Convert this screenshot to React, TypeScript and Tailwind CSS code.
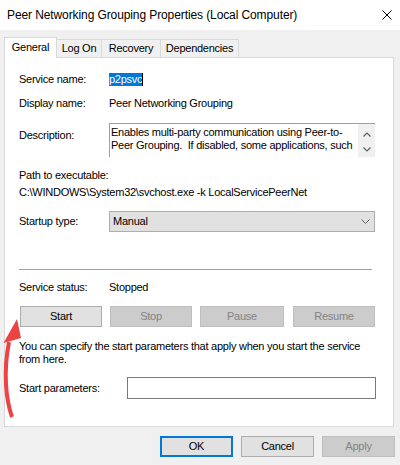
import React from "react";

const font = { fontFamily: '"Liberation Sans", Arial, sans-serif' };

function Btn({ label, w, disabled, primary }: { label: string; w: string; disabled?: boolean; primary?: boolean }) {
  let cls = "h-[21px] flex items-center justify-center shrink-0 " + w + " ";
  if (disabled) cls += "bg-[#cccccc] border border-[#bfbfbf] text-[#838383]";
  else if (primary) cls += "bg-[#e1e1e1] border-2 border-[#0078d7] text-black";
  else cls += "bg-[#e1e1e1] border border-[#adadad] text-black";
  return <div className={cls}>{label}</div>;
}

export default function App() {
  return (
    <div
      className="relative w-[400px] h-[465px] bg-[#f0f0f0] text-[11px] leading-[13px] tracking-[-0.25px] text-black overflow-hidden"
      style={font}
    >
      {/* Title bar */}
      <div className="h-[30px] bg-white flex items-center justify-between pl-[7px] pr-[8px]">
        <span className="text-[12px] tracking-[-0.1px]">Peer Networking Grouping Properties (Local Computer)</span>
        <svg width="10" height="10" viewBox="0 0 10 10">
          <path d="M0.5 0.5 L9.5 9.5 M9.5 0.5 L0.5 9.5" stroke="#000" strokeWidth="1" />
        </svg>
      </div>

      {/* Tabs */}
      <div className="mt-[7px] h-[20px] flex items-end pl-[4px]">
        <div className="relative z-10 -mb-px w-[53px] h-[21px] bg-white border border-b-0 border-[#d9d9d9] flex justify-center pt-[3px]">
          General
        </div>
        <div className="w-[45px] h-[18px] border-t border-r border-[#d9d9d9] flex items-center justify-center">Log On</div>
        <div className="w-[59px] h-[18px] border-t border-r border-[#d9d9d9] flex items-center justify-center">Recovery</div>
        <div className="w-[78px] h-[18px] border-t border-r border-[#d9d9d9] flex items-center justify-center">Dependencies</div>
      </div>

      {/* Panel */}
      <div className="ml-[4px] w-[390px] h-[370px] bg-white border border-[#d9d9d9] flex flex-col pl-[14px]">
        <div className="mt-[15px] h-[13px] flex">
          <div className="w-[90px] shrink-0">Service name:</div>
          <div className="flex items-center">
            <span className="bg-[#0078d7] text-white">p2psvc</span>
            <span className="w-px h-[13px] bg-black" />
          </div>
        </div>

        <div className="mt-[11px] h-[13px] flex">
          <div className="w-[90px] shrink-0">Display name:</div>
          <div>Peer Networking Grouping</div>
        </div>

        <div className="mt-[13px] flex">
          <div className="w-[90px] shrink-0 pt-[6px]">Description:</div>
          <div className="w-[266px] h-[34px] flex border-t border-l border-[#a0a0a0]">
            <div className="flex-1 overflow-hidden pl-[1px] pt-[2px] leading-[12.5px] whitespace-pre">
              {"Enables multi-party communication using Peer-to-\nPeer Grouping.  If disabled, some applications, such"}
            </div>
            <div className="w-[17px] shrink-0 bg-[#f0f0f0] flex flex-col items-center justify-between pt-[8px] pb-[5px]">
              <svg width="8" height="5" viewBox="0 0 8 5">
                <path d="M0.5 4.5 L4 1 L7.5 4.5" stroke="#606060" strokeWidth="1.2" fill="none" />
              </svg>
              <svg width="8" height="5" viewBox="0 0 8 5">
                <path d="M0.5 0.5 L4 4 L7.5 0.5" stroke="#606060" strokeWidth="1.2" fill="none" />
              </svg>
            </div>
          </div>
        </div>

        <div className="mt-[12px] h-[13px]">Path to executable:</div>
        <div className="mt-[4px] h-[13px]">C:\WINDOWS\System32\svchost.exe -k LocalServicePeerNet</div>

        <div className="mt-[12px] h-[21px] flex items-center">
          <div className="w-[90px] shrink-0">Startup type:</div>
          <div className="w-[266px] h-[21px] bg-[#e1e1e1] border border-[#adadad] flex items-center justify-between pl-[3px] pr-[4px]">
            <span>Manual</span>
            <svg width="9" height="5" viewBox="0 0 9 5">
              <path d="M0.5 0.5 L4.5 4.5 L8.5 0.5" stroke="#606060" strokeWidth="1" fill="none" />
            </svg>
          </div>
        </div>

        <div className="mt-[37px] h-px w-[353px] bg-[#a0a0a0]" />

        <div className="mt-[11px] h-[13px] flex">
          <div className="w-[90px] shrink-0">Service status:</div>
          <div>Stopped</div>
        </div>

        <div className="mt-[12px] flex pl-[1px]">
          <Btn label="Start" w="w-[82px]" />
          <div className="w-[8px] shrink-0" />
          <Btn label="Stop" w="w-[82px]" disabled />
          <div className="w-[8px] shrink-0" />
          <Btn label="Pause" w="w-[84px]" disabled />
          <div className="w-[9px] shrink-0" />
          <Btn label="Resume" w="w-[82px]" disabled />
        </div>

        <div className="mt-[13px] h-[26px]">
          You can specify the start parameters that apply when you start the service
          <br />
          from here.
        </div>

        <div className="mt-[11px] h-[22px] flex items-center">
          <div className="w-[108px] shrink-0">Start parameters:</div>
          <div className="w-[249px] h-[22px] bg-white border border-[#7a7a7a]" />
        </div>
      </div>

      {/* Bottom buttons */}
      <div className="mt-[9px] flex justify-end gap-[8px] pr-[5px]">
        <Btn label="OK" w="w-[73px]" primary />
        <Btn label="Cancel" w="w-[73px]" />
        <Btn label="Apply" w="w-[73px]" disabled />
      </div>

      {/* Red annotation arrow */}
      <svg className="absolute left-0 top-0 pointer-events-none" width="400" height="465" viewBox="0 0 400 465">
        <path d="M12 417 C 6 400, 3 372, 9 342" stroke="#ee4343" strokeWidth="4" fill="none" strokeLinecap="butt" />
        <path d="M17 319 L3.5 343 L21 338 Z" fill="#ee4343" />
      </svg>
    </div>
  );
}
